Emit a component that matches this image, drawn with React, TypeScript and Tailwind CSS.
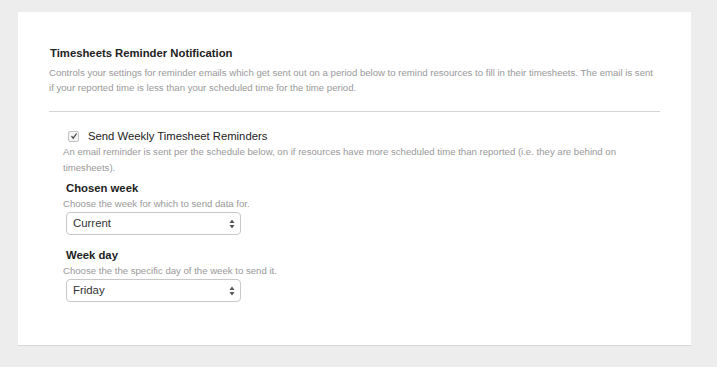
function SelectBox({ value }: { value: string }) {
  return (
    <div className="w-[175px] h-[23px] border border-[#c8c8c8] rounded-[4px] bg-white flex items-center justify-between pl-[6px] pr-[5px]">
      <span className="text-[11.4px] text-[#333]">{value}</span>
      <svg width="6" height="10" viewBox="0 0 6 10">
        <path d="M3 0.5 L5.5 4 L0.5 4 Z" fill="#555" />
        <path d="M3 9.5 L5.5 6 L0.5 6 Z" fill="#555" />
      </svg>
    </div>
  )
}

function Field({ label, hint, value }: { label: string; hint: string; value: string }) {
  return (
    <div>
      <div className="text-[11.3px] font-bold text-[#222] leading-[14px] pl-[3px]">{label}</div>
      <div className="text-[9.6px] text-[#999] leading-[15px] mt-[1px]">{hint}</div>
      <div className="pl-[3px] mt-[1px]">
        <SelectBox value={value} />
      </div>
    </div>
  )
}

export default function App() {
  return (
    <div className="min-h-screen bg-[#ededed] pt-[12px] px-[18px] font-['Liberation_Sans',Arial,sans-serif]">
      <div className="bg-white w-[673px] h-[334px] border-b border-[#d6d6d6] pt-[34px] px-[30px]">
        <div className="px-[1px]">
          <h2 className="text-[11.3px] font-bold text-[#222] leading-[14px] pl-[1px]">Timesheets Reminder Notification</h2>
          <p className="text-[9.6px] text-[#999] leading-[15px] mt-[5px]">
            Controls your settings for reminder emails which get sent out on a period below to remind resources to fill in their timesheets. The email is sent if your reported time is less than your scheduled time for the time period.
          </p>
        </div>
        <div className="border-t border-[#d4d4d4] mt-[16px] mx-[1px]" />
        <div className="pl-[15px] pt-[17px]">
          <label className="flex items-center gap-[9px] pl-[5px]">
            <span className="w-[11px] h-[11px] border border-[#c4c4c4] rounded-[2px] bg-[#f3f3f3] flex items-center justify-center">
              <svg width="8" height="8" viewBox="0 0 8 8">
                <path d="M1.5 4.2 L3.2 6.2 L6.6 1.5" stroke="#444" strokeWidth="1.2" fill="none" />
              </svg>
            </span>
            <span className="text-[11.3px] text-[#222] leading-[14px]">Send Weekly Timesheet Reminders</span>
          </label>
          <p className="text-[9.6px] text-[#999] leading-[16px] mt-[1px]">
            An email reminder is sent per the schedule below, on if resources have more scheduled time than reported (i.e. they are behind on timesheets).
          </p>
          <div className="mt-[5px] flex flex-col gap-[13px]">
            <Field label="Chosen week" hint="Choose the week for which to send data for." value="Current" />
            <Field label="Week day" hint="Choose the the specific day of the week to send it." value="Friday" />
          </div>
        </div>
      </div>
    </div>
  )
}
